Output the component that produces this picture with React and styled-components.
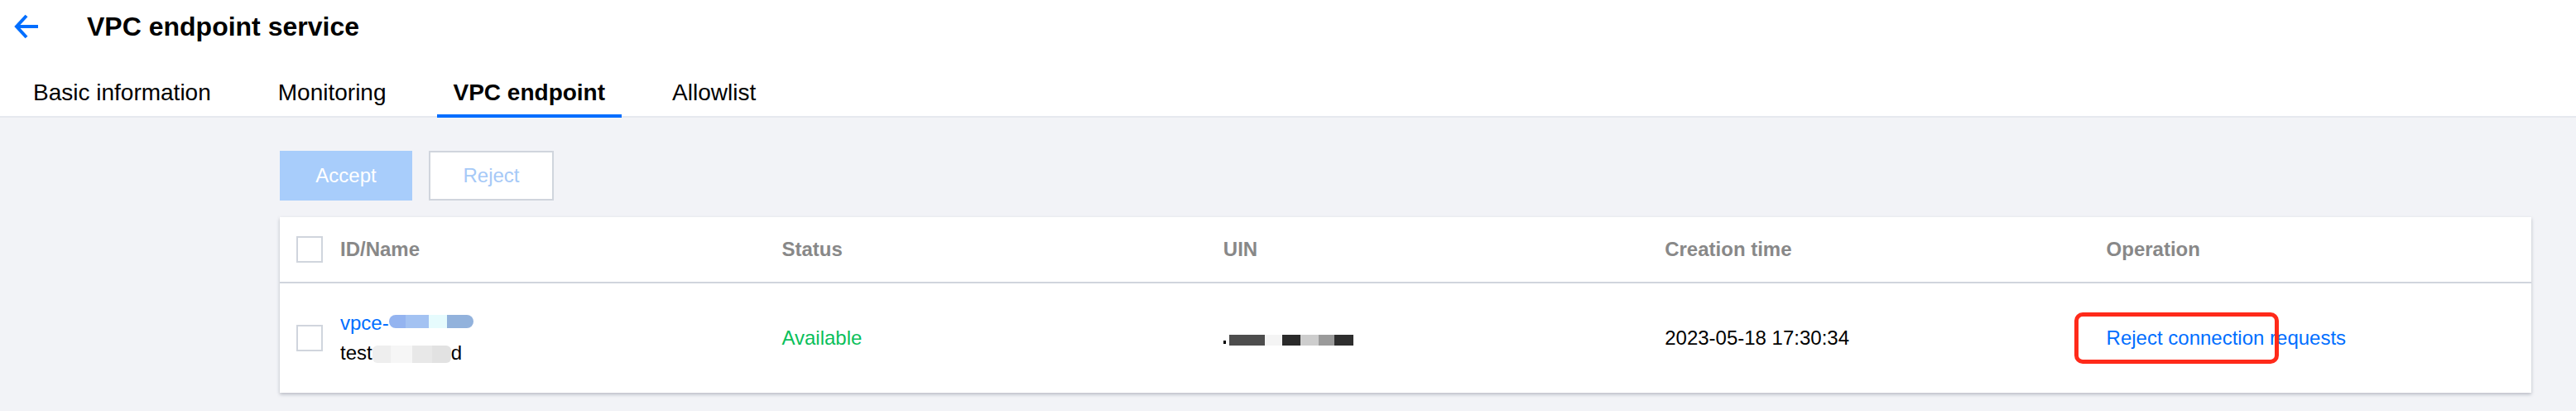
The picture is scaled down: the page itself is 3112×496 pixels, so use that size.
import React from 'react';
import styled, { createGlobalStyle } from 'styled-components';

const GlobalStyle = createGlobalStyle`
  html, body {
    margin: 0;
    padding: 0;
    background: #f2f3f7;
    font-family: "Liberation Sans", Arial, Helvetica, sans-serif;
    color: #000;
  }
`;

const Header = styled.header`
  background: #fff;
  border-bottom: 2px solid #e6e9ef;
  padding-top: 16px;
`;

const TitleRow = styled.div`
  display: flex;
  align-items: center;
  height: 32px;
  padding-left: 16px;
  gap: 57px;
`;

const Title = styled.h1`
  margin: 0;
  font-size: 32px;
  line-height: 32px;
  font-weight: 700;
`;

const Tabs = styled.nav`
  display: flex;
  margin-top: 50px;
  padding-left: 20px;
  gap: 41px;
`;

const Tab = styled.div`
  position: relative;
  padding: 0 20px 14px;
  font-size: 28px;
  line-height: 28px;
  font-weight: ${(p) => (p.$active ? 700 : 400)};

  &::after {
    content: '';
    display: ${(p) => (p.$active ? 'block' : 'none')};
    position: absolute;
    left: 0;
    right: 0;
    bottom: -2px;
    height: 4px;
    background: #006eff;
  }
`;

const Main = styled.main`
  padding: 40px 54px 40px 338px;
`;

const Toolbar = styled.div`
  display: flex;
  gap: 20px;
  margin-bottom: 20px;
`;

const Button = styled.button`
  box-sizing: border-box;
  height: 60px;
  width: ${(p) => (p.$primary ? '160px' : '151px')};
  font-family: inherit;
  font-size: 24px;
  border: ${(p) => (p.$primary ? 'none' : '2px solid #d0d5dd')};
  background: ${(p) => (p.$primary ? '#a8cdfb' : '#fff')};
  color: ${(p) => (p.$primary ? '#fff' : '#a6c9f7')};
  padding: 0;
`;

const Card = styled.div`
  background: #fff;
  box-shadow: 0 2px 4px rgba(54, 58, 80, 0.3);
`;

const Row = styled.div`
  display: grid;
  grid-template-columns: 53px repeat(5, 1fr);
  height: ${(p) => (p.$head ? '78px' : '132px')};
  border-bottom: ${(p) => (p.$head ? '2px solid #d0d5dd' : 'none')};
  font-size: 24px;
  line-height: 36px;
  color: ${(p) => (p.$head ? '#888' : '#000')};
  font-weight: ${(p) => (p.$head ? 700 : 400)};
`;

const Cell = styled.div`
  display: flex;
  flex-direction: column;
  justify-content: center;
  padding-left: 20px;
  color: ${(p) => p.$color || 'inherit'};
`;

const Checkbox = styled.span`
  box-sizing: border-box;
  display: block;
  width: 32px;
  height: 32px;
  border: 2px solid #d0d5dd;
  background: #fff;
`;

const Link = styled.a`
  color: #006eff;
  text-decoration: none;
`;

const Annotated = styled.span`
  position: relative;
  align-self: flex-start;
`;

const Highlight = styled.span`
  position: absolute;
  box-sizing: border-box;
  left: -39px;
  top: -13px;
  width: 247px;
  height: 62px;
  border: 5px solid #ff2a1a;
  border-radius: 10px;
`;

const Line = styled.span`
  display: flex;
  align-items: center;
  white-space: nowrap;
`;

const Mosaic = styled.span`
  display: inline-flex;
  height: ${(p) => p.$h}px;
  margin-top: ${(p) => p.$dy || 0}px;
  border-radius: ${(p) => p.$r || 0}px;
  overflow: hidden;
`;

const Block = styled.span`
  display: block;
  width: ${(p) => p.$w}px;
  background: ${(p) => p.$c};
`;

const Dot = styled.span`
  display: inline-block;
  width: 3px;
  height: 4px;
  background: #000;
  margin: 10px 4px 0 0;
`;

function Blur({ blocks, h, dy, r }) {
  return (
    <Mosaic $h={h} $dy={dy} $r={r}>
      {blocks.map(([w, c], i) => (
        <Block key={i} $w={w} $c={c} />
      ))}
    </Mosaic>
  );
}

function BackArrow() {
  return (
    <svg width="32" height="32" viewBox="0 0 32 32" fill="none">
      <path d="M16 3 L4 16 L16 29 M4 16 H30" stroke="#006eff" strokeWidth="4" />
    </svg>
  );
}

export default function App() {
  return (
    <>
      <GlobalStyle />
      <Header>
        <TitleRow>
          <BackArrow />
          <Title>VPC endpoint service</Title>
        </TitleRow>
        <Tabs>
          <Tab>Basic information</Tab>
          <Tab>Monitoring</Tab>
          <Tab $active>VPC endpoint</Tab>
          <Tab>Allowlist</Tab>
        </Tabs>
      </Header>
      <Main>
        <Toolbar>
          <Button $primary>Accept</Button>
          <Button>Reject</Button>
        </Toolbar>
        <Card>
          <Row $head>
            <Cell><Checkbox /></Cell>
            <Cell>ID/Name</Cell>
            <Cell>Status</Cell>
            <Cell>UIN</Cell>
            <Cell>Creation time</Cell>
            <Cell>Operation</Cell>
          </Row>
          <Row>
            <Cell><Checkbox /></Cell>
            <Cell>
              <Line>
                <Link href="#">vpce-</Link>
                <Blur
                  h={16}
                  dy={-4}
                  r={8}
                  blocks={[[20, '#94b4f0'], [28, '#a3c2f2'], [22, '#e6fbfd'], [32, '#92b2dc']]}
                />
              </Line>
              <Line>
                test
                <Blur
                  h={21}
                  dy={2}
                  r={6}
                  blocks={[[22, '#eeeeee'], [26, '#f6f6f6'], [24, '#e8e8e8'], [23, '#e2e2e2']]}
                />
                d
              </Line>
            </Cell>
            <Cell $color="#0abf5b">Available</Cell>
            <Cell>
              <Line>
                <Dot />
                <Blur
                  h={13}
                  dy={5}
                  blocks={[[43, '#4d4d4d'], [21, '#f4f4f4'], [22, '#2a2a2a'], [22, '#cdcdcd'], [19, '#9a9a9a'], [23, '#2e2e2e']]}
                />
              </Line>
            </Cell>
            <Cell>2023-05-18 17:30:34</Cell>
            <Cell>
              <Annotated>
                <Link href="#">Reject connection requests</Link>
                <Highlight />
              </Annotated>
            </Cell>
          </Row>
        </Card>
      </Main>
    </>
  );
}
